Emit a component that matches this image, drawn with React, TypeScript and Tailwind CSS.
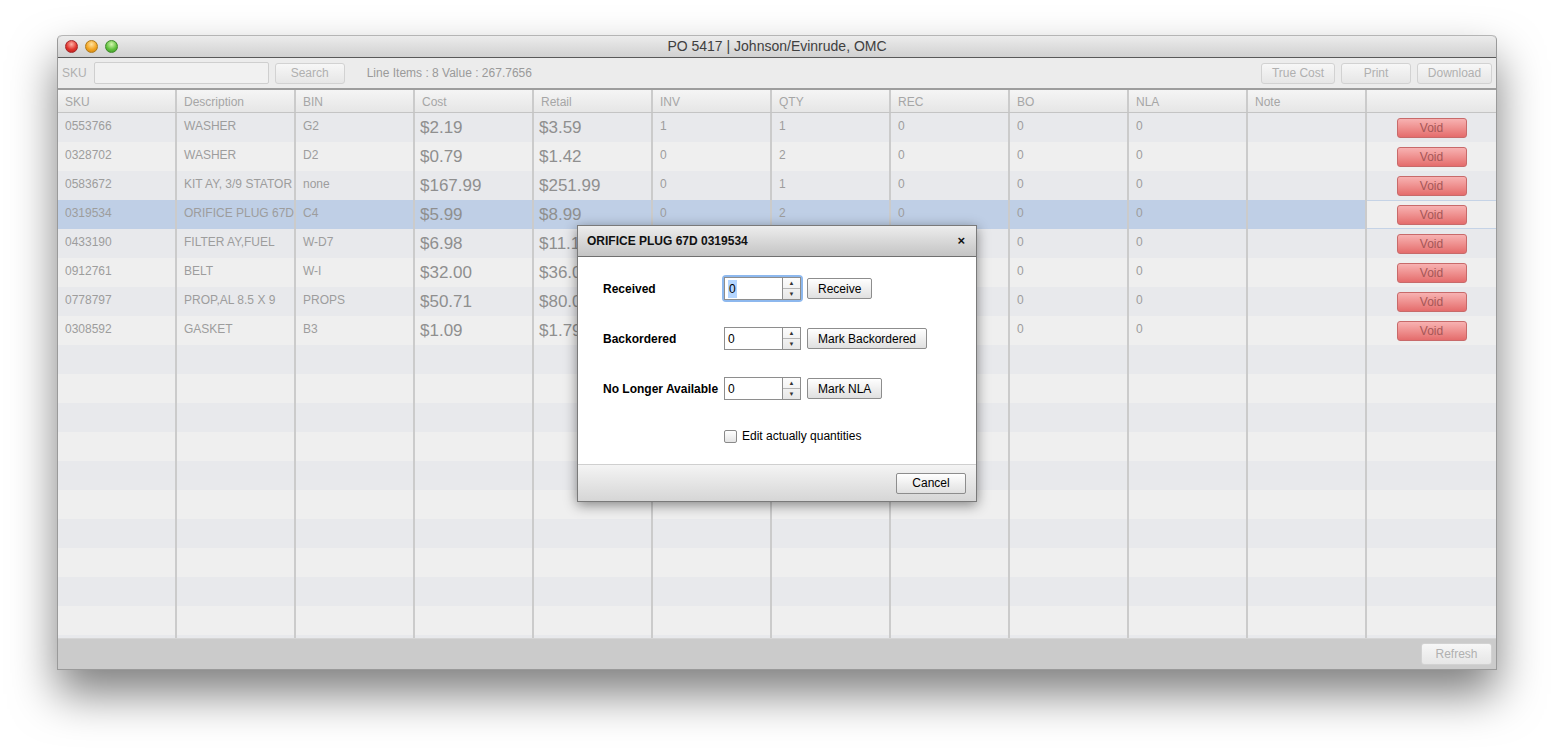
import React from 'react';

const columns = ['SKU', 'Description', 'BIN', 'Cost', 'Retail', 'INV', 'QTY', 'REC', 'BO', 'NLA', 'Note', ''];

const items = [
  ['0553766', 'WASHER', 'G2', '$2.19', '$3.59', '1', '1', '0', '0', '0'],
  ['0328702', 'WASHER', 'D2', '$0.79', '$1.42', '0', '2', '0', '0', '0'],
  ['0583672', 'KIT AY, 3/9 STATOR', 'none', '$167.99', '$251.99', '0', '1', '0', '0', '0'],
  ['0319534', 'ORIFICE PLUG 67D', 'C4', '$5.99', '$8.99', '0', '2', '0', '0', '0'],
  ['0433190', 'FILTER AY,FUEL', 'W-D7', '$6.98', '$11.17', '0', '1', '0', '0', '0'],
  ['0912761', 'BELT', 'W-I', '$32.00', '$36.00', '0', '1', '0', '0', '0'],
  ['0778797', 'PROP,AL 8.5 X 9', 'PROPS', '$50.71', '$80.08', '0', '1', '0', '0', '0'],
  ['0308592', 'GASKET', 'B3', '$1.09', '$1.79', '0', '1', '0', '0', '0'],
];

const gridCols = 'grid grid-cols-[repeat(11,119px)_1fr]';

const MacButton = ({ label, className = '' }: { label: string; className?: string }) => (
  <div
    className={`h-[21px] flex items-center justify-center rounded-[3px] border border-[#d2d2d2] bg-linear-to-b from-[#f7f7f7] to-[#e6e6e6] text-[12px] text-[#b0b0b0] ${className}`}
  >
    {label}
  </div>
);

const Spinner = ({ focused }: { focused?: boolean }) => (
  <div
    className={`flex h-[23px] w-[77px] ${focused ? 'shadow-[0_0_0_2px_#8db8ee] rounded-[2px]' : ''}`}
  >
    <div className="flex-1 border border-[#8e8e8e] bg-white flex items-center pl-[3px] text-[12px] text-black">
      {focused ? <span className="bg-[#b4d5fe] px-[1px]">0</span> : '0'}
    </div>
    <div className="w-[18px] flex flex-col border border-l-0 border-[#8e8e8e] bg-linear-to-b from-[#fdfdfd] to-[#e7e7e7]">
      <div className="flex-1 flex items-center justify-center border-b border-[#b5b5b5] text-[6px] leading-none text-[#333]">▲</div>
      <div className="flex-1 flex items-center justify-center text-[6px] leading-none text-[#333]">▼</div>
    </div>
  </div>
);

const DialogButton = ({ label }: { label: string }) => (
  <div className="h-[21px] px-[10px] flex items-center rounded-[2px] border border-[#8d8d8d] bg-linear-to-b from-[#ffffff] to-[#e0e0e0] text-[12px] text-black">
    {label}
  </div>
);

const App = () => {
  return (
    <div className="w-[1554px] h-[749px] bg-white overflow-hidden pl-[57px] pt-[35px] font-['Liberation_Sans',Arial,sans-serif]">
      <div className="relative w-[1440px] h-[635px] flex flex-col rounded-t-[5px] border-x border-b border-[#9a9a9a] bg-[#ececec] shadow-[0_24px_45px_rgba(0,0,0,0.5)]">
        {/* title bar */}
        <div className="relative h-[23px] shrink-0 flex items-center rounded-t-[5px] border-t border-[#b5b5b5] border-b border-b-[#595959] bg-linear-to-b from-[#ececec] to-[#d1d1d1]">
          <div className="flex gap-[7px] pl-[7px]">
            <span className="w-[13px] h-[13px] rounded-full border border-[#a3262a] bg-[radial-gradient(circle_at_50%_30%,#ffb0a6,#e0352e_55%,#b51c1a)]" />
            <span className="w-[13px] h-[13px] rounded-full border border-[#b07a1a] bg-[radial-gradient(circle_at_50%_30%,#ffe3a0,#f3a523_55%,#c9800f)]" />
            <span className="w-[13px] h-[13px] rounded-full border border-[#3f8a2b] bg-[radial-gradient(circle_at_50%_30%,#d4f7b0,#62c23f_55%,#379224)]" />
          </div>
          <div className="absolute inset-0 flex items-center justify-center text-[14px] text-[#404040]">
            PO 5417 | Johnson/Evinrude, OMC
          </div>
        </div>

        {/* toolbar */}
        <div className="h-[32px] shrink-0 flex items-center border-b-2 border-[#9d9d9d] bg-[#ececec] pl-[4px] pr-[4px]">
          <span className="text-[12px] text-[#b0b0b0] mr-[7px]">SKU</span>
          <div className="w-[175px] h-[22px] border border-[#cfcfcf] bg-[#f1f1f1] rounded-[2px]" />
          <MacButton label="Search" className="w-[70px] ml-[6px]" />
          <span className="ml-[22px] text-[12px] text-[#9a9a9a]">Line Items : 8 Value : 267.7656</span>
          <div className="ml-auto flex gap-[6px]">
            <MacButton label="True Cost" className="w-[74px]" />
            <MacButton label="Print" className="w-[70px]" />
            <MacButton label="Download" className="w-[75px]" />
          </div>
        </div>

        {/* header */}
        <div className={`${gridCols} h-[23px] shrink-0 border-b border-[#c4c4c4] bg-linear-to-b from-[#f5f5f5] to-[#e6e6e6]`}>
          {columns.map((c, i) => (
            <div
              key={i}
              className={`pl-[7px] pt-[3px] text-[12px] text-[#a6a6a6] ${i < 11 ? 'border-r-2 border-[#cbcbcb]' : ''}`}
            >
              {c}
            </div>
          ))}
        </div>

        {/* rows */}
        <div className="h-[525px] shrink-0 overflow-hidden flex flex-col">
          {Array.from({ length: 19 }).map((_, r) => {
            const item = items[r];
            const selected = r === 3;
            const bg = selected ? 'bg-[#bfcfe6]' : r % 2 === 0 ? 'bg-[#e8e9ec]' : 'bg-[#efefef]';
            return (
              <div key={r} className={`${gridCols} h-[29px] shrink-0 ${bg}`}>
                {columns.map((_, c) => {
                  const border = c < 11 ? 'border-r-2 border-[#cbcbcb]' : '';
                  if (c === 11) {
                    return (
                      <div
                        key={c}
                        className={`flex items-center justify-center ${selected ? 'bg-[#efefef] border-y border-[#c5d3e6]' : ''}`}
                      >
                        {item && (
                          <div className="w-[70px] h-[20px] flex items-center justify-center rounded-[3px] border border-[#c86a6a] bg-linear-to-b from-[#f7b2b2] to-[#e46c6c] text-[12px] text-[#a65757]">
                            Void
                          </div>
                        )}
                      </div>
                    );
                  }
                  const v = item ? item[c] ?? '' : '';
                  const big = c === 3 || c === 4;
                  return (
                    <div
                      key={c}
                      className={`${border} overflow-hidden whitespace-nowrap ${
                        big ? 'pl-[5px] pt-[2px] text-[17px] text-[#8f8f8f]' : 'pl-[7px] pt-[4px] text-[12px] text-[#9d9d9d]'
                      }`}
                    >
                      {v}
                    </div>
                  );
                })}
              </div>
            );
          })}
        </div>

        {/* bottom bar */}
        <div className="flex-1 flex items-center justify-end pr-[4px] border-t border-[#d5d5d5] bg-[#cbcbcb]">
          <MacButton label="Refresh" className="w-[71px] h-[22px]" />
        </div>

        {/* dialog */}
        <div className="absolute left-[519px] top-[190px] w-[400px] h-[277px] flex flex-col border border-[#7a7a7a] bg-white shadow-[0_3px_12px_rgba(0,0,0,0.45)]">
          <div className="h-[31px] flex items-center justify-between pl-[9px] pr-[11px] border-b border-[#6f6f6f] bg-linear-to-b from-[#ededed] to-[#c4c4c4]">
            <span className="text-[12px] font-bold text-[#111]">ORIFICE PLUG 67D 0319534</span>
            <span className="text-[13px] font-bold text-[#111]">×</span>
          </div>
          <div className="flex-1 flex flex-col pl-[25px] pt-[20px]">
            {[
              ['Received', 'Receive', true],
              ['Backordered', 'Mark Backordered', false],
              ['No Longer Available', 'Mark NLA', false],
            ].map(([label, btn, focused]) => (
              <div key={label as string} className="flex items-center h-[23px] mb-[27px]">
                <span className="w-[121px] text-[12px] font-bold text-black">{label}</span>
                <Spinner focused={focused as boolean} />
                <div className="ml-[6px]">
                  <DialogButton label={btn as string} />
                </div>
              </div>
            ))}
            <div className="flex items-center ml-[121px]">
              <span className="w-[13px] h-[13px] border border-[#8a8a8a] rounded-[2px] bg-linear-to-b from-[#ffffff] to-[#e4e4e4]" />
              <span className="ml-[5px] text-[12px] text-black">Edit actually quantities</span>
            </div>
          </div>
          <div className="h-[37px] flex items-center justify-end pr-[10px] border-t border-[#cfcfcf] bg-linear-to-b from-[#f4f4f4] to-[#d6d6d6]">
            <div className="w-[70px] h-[21px] flex items-center justify-center rounded-[2px] border border-[#8d8d8d] bg-linear-to-b from-[#ffffff] to-[#e0e0e0] text-[12px] text-black">
              Cancel
            </div>
          </div>
        </div>
      </div>
    </div>
  );
};

export default App;
